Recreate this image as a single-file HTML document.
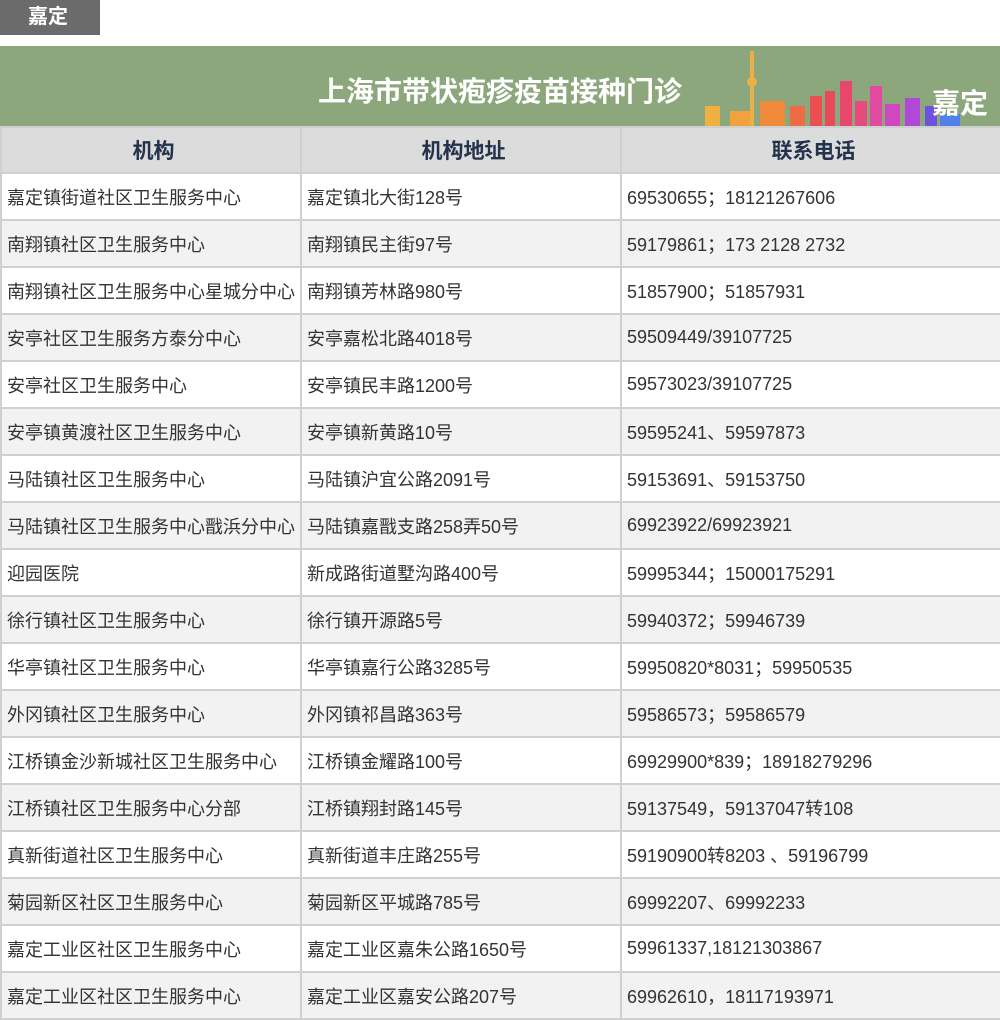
<!DOCTYPE html>
<html><head><meta charset="utf-8"><style>
*{margin:0;padding:0;box-sizing:border-box}
body{width:1000px;height:1018px;overflow:hidden;background:#fff;font-family:"Liberation Sans","Noto Sans CJK SC",sans-serif;position:relative}
.tab{position:absolute;left:0;top:0;width:100px;height:35px;background:#6b6b6b;color:#fff;font-weight:bold;font-size:20px;line-height:35px;padding-left:28px}
.banner{position:absolute;left:0;top:46px;width:1000px;height:80px;background:#8da77c;overflow:hidden}
.banner .t{position:absolute;left:318px;top:24px;color:#fff;font-weight:bold;font-size:28px}
.banner .jd{position:absolute;left:932px;top:36px;color:#fff;font-weight:bold;font-size:28px}
table{position:absolute;left:0;top:126px;width:1000px;border-collapse:collapse;table-layout:fixed}
td,th{border:2px solid #d0d0d0;height:47px;font-size:18px;color:#333;padding-left:5px;white-space:nowrap;overflow:hidden;font-weight:normal;text-align:left}
th{background:#dcdcdc;color:#23324d;font-weight:bold;font-size:21px;text-align:center;height:46px}
tr:nth-child(odd) td{background:#f2f2f2}
tr:nth-child(even) td{background:#fff}
</style></head><body>
<div class="tab">嘉定</div>
<div class="banner">
<div class="t">上海市带状疱疹疫苗接种门诊</div>
<svg style="position:absolute;left:700px;top:0" width="300" height="80">
<rect x="50" y="5" width="4" height="75" fill="#e9b04a"/><circle cx="52" cy="36" r="5" fill="#e9b04a"/>
<rect x="5" y="60" width="15" height="20" fill="#f0b040"/>
<rect x="30" y="65" width="20" height="15" fill="#f2a23c"/>
<rect x="60" y="55" width="25" height="25" fill="#f08a3a"/>
<rect x="90" y="60" width="15" height="20" fill="#ee6b45"/>
<rect x="110" y="50" width="12" height="30" fill="#ea5050"/>
<rect x="125" y="45" width="10" height="35" fill="#e84a5a"/>
<rect x="140" y="35" width="12" height="45" fill="#e8466a"/>
<rect x="155" y="55" width="12" height="25" fill="#e84a80"/>
<rect x="170" y="40" width="12" height="40" fill="#e04aa0"/>
<rect x="185" y="58" width="15" height="22" fill="#d048c0"/>
<rect x="205" y="52" width="15" height="28" fill="#b048d8"/>
<rect x="225" y="60" width="12" height="20" fill="#7050e0"/>
<rect x="240" y="68" width="20" height="12" fill="#5080e8"/>
</svg>
<div class="jd">嘉定</div>
</div>
<table>
<colgroup><col style="width:300px"><col style="width:320px"><col style="width:380px"></colgroup>
<tr><th>机构</th><th>机构地址</th><th>联系电话</th></tr>
<tr><td>嘉定镇街道社区卫生服务中心</td><td>嘉定镇北大街128号</td><td>69530655；18121267606</td></tr>
<tr><td>南翔镇社区卫生服务中心</td><td>南翔镇民主街97号</td><td>59179861；173 2128 2732</td></tr>
<tr><td>南翔镇社区卫生服务中心星城分中心</td><td>南翔镇芳林路980号</td><td>51857900；51857931</td></tr>
<tr><td>安亭社区卫生服务方泰分中心</td><td>安亭嘉松北路4018号</td><td>59509449/39107725</td></tr>
<tr><td>安亭社区卫生服务中心</td><td>安亭镇民丰路1200号</td><td>59573023/39107725</td></tr>
<tr><td>安亭镇黄渡社区卫生服务中心</td><td>安亭镇新黄路10号</td><td>59595241、59597873</td></tr>
<tr><td>马陆镇社区卫生服务中心</td><td>马陆镇沪宜公路2091号</td><td>59153691、59153750</td></tr>
<tr><td>马陆镇社区卫生服务中心戬浜分中心</td><td>马陆镇嘉戬支路258弄50号</td><td>69923922/69923921</td></tr>
<tr><td>迎园医院</td><td>新成路街道墅沟路400号</td><td>59995344；15000175291</td></tr>
<tr><td>徐行镇社区卫生服务中心</td><td>徐行镇开源路5号</td><td>59940372；59946739</td></tr>
<tr><td>华亭镇社区卫生服务中心</td><td>华亭镇嘉行公路3285号</td><td>59950820*8031；59950535</td></tr>
<tr><td>外冈镇社区卫生服务中心</td><td>外冈镇祁昌路363号</td><td>59586573；59586579</td></tr>
<tr><td>江桥镇金沙新城社区卫生服务中心</td><td>江桥镇金耀路100号</td><td>69929900*839；18918279296</td></tr>
<tr><td>江桥镇社区卫生服务中心分部</td><td>江桥镇翔封路145号</td><td>59137549，59137047转108</td></tr>
<tr><td>真新街道社区卫生服务中心</td><td>真新街道丰庄路255号</td><td>59190900转8203 、59196799</td></tr>
<tr><td>菊园新区社区卫生服务中心</td><td>菊园新区平城路785号</td><td>69992207、69992233</td></tr>
<tr><td>嘉定工业区社区卫生服务中心</td><td>嘉定工业区嘉朱公路1650号</td><td>59961337,18121303867</td></tr>
<tr><td>嘉定工业区社区卫生服务中心</td><td>嘉定工业区嘉安公路207号</td><td>69962610，18117193971</td></tr>
</table>
</body></html>
